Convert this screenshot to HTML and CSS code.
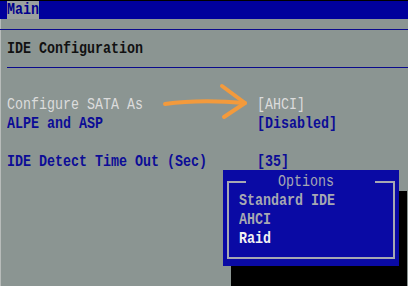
FILE: index.html
```html
<!DOCTYPE html>
<html lang="en">
<head>
  <meta charset="UTF-8">
  <meta name="viewport" content="width=device-width, initial-scale=1.0">
  <title>BIOS Setup</title>
  <link rel="stylesheet" href="styles.css">
</head>
<body>
  <div class="screen">
    <div class="topbar">
      <span class="tab"><span class="txt">Main</span></span>
    </div>
    <div class="rule"></div>

    <div class="section-title"><span class="txt">IDE Configuration</span></div>
    <div class="rule rule-inset"></div>

    <div class="settings">
      <div class="row selected"><span class="txt">Configure SATA As</span><span class="txt">[AHCI]</span></div>
      <div class="row"><span class="txt">ALPE and ASP</span><span class="txt">[Disabled]</span></div>
      <div class="row"></div>
      <div class="row"><span class="txt">IDE Detect Time Out (Sec)</span><span class="txt">[35]</span></div>
    </div>

    <svg class="arrow" width="408" height="286" viewBox="0 0 408 286">
      <path d="M165 104 Q 200 99 245 103" fill="none" stroke="#f39a3c" stroke-width="4" stroke-linecap="round"/>
      <path d="M222 86 L245 103 L224 117" fill="none" stroke="#f39a3c" stroke-width="4" stroke-linecap="round" stroke-linejoin="round"/>
    </svg>

    <div class="popup">
      <div class="options">
        <div class="options-title"><span class="txt">Options</span></div>
        <div class="option"><span class="txt">Standard IDE</span></div>
        <div class="option"><span class="txt">AHCI</span></div>
        <div class="option current"><span class="txt">Raid</span></div>
      </div>
    </div>
  </div>
</body>
</html>
```

FILE: styles.css
```css
body { margin: 0; background: #8b9592; font-family: "Liberation Mono", "DejaVu Sans Mono", monospace; font-size: 13.33px; font-weight: bold; }
.screen { position: relative; width: 408px; height: 286px; overflow: hidden; background: #8b9592; box-shadow: inset 1px 0 0 #b8bcba; }
.txt { display: inline-block; transform: scaleY(1.25); white-space: pre; }

.topbar { height: 18px; border-top: 1px solid #000; background: #00009c; padding-left: 7px; display: flex; }
.tab { width: 32px; background: #9aa19f; color: #00008c; line-height: 18px; }

.rule { height: 1px; margin-top: 10px; background: #0a0a8c; }
.rule-inset { margin-top: 9px; margin-left: 7px; }

.section-title { margin-top: 9px; padding-left: 7px; line-height: 19px; color: #111; }

.settings { margin-top: 27px; padding-left: 7px; }
.row { display: grid; grid-template-columns: 250px 1fr; height: 19px; line-height: 19px; color: #0c0c96; }
.row.selected { color: #dcdcdc; font-weight: normal; }

.arrow { position: absolute; left: 0; top: 0; }

.popup { position: absolute; left: 223px; top: 170px; width: 176px; height: 96px; box-sizing: border-box; padding: 11px 4px 0; background: #0a0aa4; box-shadow: 8px 21px 0 #000; }
.options { position: relative; height: 78px; box-sizing: border-box; padding: 8px 0 0 10px; border: 2px solid #a6a8b2; }
.options-title { position: absolute; left: 17px; top: -11px; padding: 0 41px 0 32px; line-height: 19px; background: #0a0aa4; color: #a6a8b2; font-weight: normal; }
.option { height: 19px; line-height: 19px; color: #a6a8b2; }
.option.current { color: #f2f2f2; }
```
